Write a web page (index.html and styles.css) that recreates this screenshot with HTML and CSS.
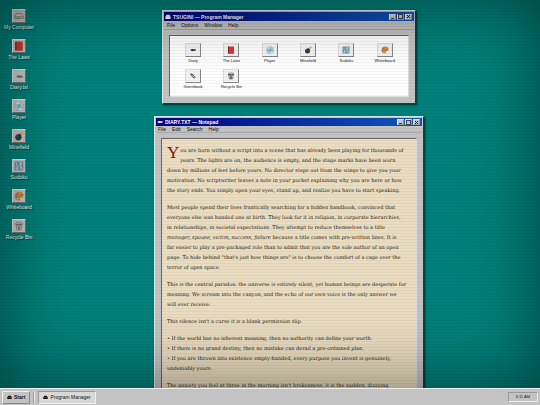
FILE: index.html
```html
<!DOCTYPE html>
<html lang="en">
<head>
    <meta charset="UTF-8">
    <meta name="viewport" content="width=device-width, initial-scale=1.0">
    <title>TSUGINI</title>
    <link rel="stylesheet" href="styles.css">
</head>
<body>
    <!-- Shared icons -->
    <svg class="sprite" aria-hidden="true">
        <symbol id="computer" viewBox="0 0 16 16">
            <path d="M4 2h8l3 6v5H1V8z" fill="currentColor"/>
            <path d="M3 8h10" stroke="#999" stroke-width="1"/>
        </symbol>
        <symbol id="drive" viewBox="0 0 16 16">
            <path d="M4 4h8l3 5v3H1V9z" fill="#d0d0d0" stroke="#666" stroke-width="1"/>
            <path d="M1 9h14M4 11h6" stroke="#666" stroke-width="1"/>
        </symbol>
        <symbol id="book" viewBox="0 0 16 16">
            <path d="M2 1h12v14H2z" fill="#d43a32"/>
            <path d="M2 1h2v14H2z" fill="#8f1d1d"/>
            <path d="M4 14h10v1H4z" fill="#933"/>
        </symbol>
        <symbol id="pen" viewBox="0 0 16 16">
            <path d="M0 8l6-3 3 1h6v4H9l-3 1z" fill="currentColor"/>
        </symbol>
        <symbol id="disc" viewBox="0 0 16 16">
            <circle cx="8" cy="8" r="7" fill="#a9d3da" stroke="#87b5bf" stroke-width="1"/>
            <path d="M8 8L3 3a7 7 0 0 1 5-2zM8 8l5 5a7 7 0 0 1-5 2z" fill="#cfe9ed"/>
            <circle cx="8" cy="8" r="3" fill="#6b9dab"/>
            <circle cx="8" cy="8" r="1" fill="#fff"/>
        </symbol>
        <symbol id="bomb" viewBox="0 0 16 16">
            <circle cx="7" cy="10" r="5" fill="#343a3d"/>
            <path d="M9 4l3 3-2 2-3-3z" fill="#343a3d"/>
            <path d="M11 5q1-3 3-2" fill="none" stroke="#97703b" stroke-width="1"/>
            <path d="M13 0l1 2 2 1-2 1-1 2-1-2-2-1 2-1z" fill="#f0a030"/>
            <circle cx="5" cy="8" r="1" fill="#777"/>
        </symbol>
        <symbol id="numbers" viewBox="0 0 16 16">
            <rect x="1" y="1" width="14" height="14" fill="#7199ae"/>
            <path d="M4 3v4M9 3h3v2H9v2h3M4 9h2v4H3M6 11H4M10 9v2h3M12 9v4" fill="none" stroke="#dcebf1" stroke-width="1"/>
        </symbol>
        <symbol id="palette" viewBox="0 0 16 16">
            <path d="M8 1c5 0 8 3 7 7-1 3-4 1-5 3s1 4-3 4c-4 0-6-3-6-7s3-7 7-7z" fill="#ca8444"/>
            <circle cx="5" cy="5" r="1" fill="#d43c32"/>
            <circle cx="9" cy="4" r="1" fill="#f3d04a"/>
            <circle cx="12" cy="7" r="1" fill="#4a90b8"/>
            <circle cx="4" cy="9" r="1" fill="#54914a"/>
            <circle cx="6" cy="12" r="1" fill="#fff"/>
        </symbol>
        <symbol id="pencil" viewBox="0 0 16 16">
            <path d="M2 2l4 1 8 8-3 3-8-8z" fill="#ddd" stroke="#222" stroke-width="2"/>
            <path d="M5 8l4-4" stroke="#222" stroke-width="1"/>
        </symbol>
        <symbol id="bin" viewBox="0 0 16 16">
            <path d="M3 5h10l-2 9H5z" fill="none" stroke="currentColor" stroke-width="1"/>
            <path d="M5 6l5 8M11 6l-5 8M8 6v7" stroke="currentColor" stroke-width="1"/>
            <ellipse cx="8" cy="4" rx="6" ry="2" fill="none" stroke="currentColor" stroke-width="1"/>
        </symbol>
    </svg>

    <main class="desktop">
        <nav class="shortcuts">
            <button class="shortcut"><span class="tile"><svg class="icon"><use href="#drive"/></svg></span>My Computer</button>
            <button class="shortcut"><span class="tile"><svg class="icon"><use href="#book"/></svg></span>The Laws</button>
            <button class="shortcut"><span class="tile"><svg class="icon small light"><use href="#pen"/></svg></span>Diary.txt</button>
            <button class="shortcut"><span class="tile"><svg class="icon"><use href="#disc"/></svg></span>Player</button>
            <button class="shortcut"><span class="tile"><svg class="icon"><use href="#bomb"/></svg></span>Minefield</button>
            <button class="shortcut"><span class="tile"><svg class="icon"><use href="#numbers"/></svg></span>Sudoku</button>
            <button class="shortcut"><span class="tile"><svg class="icon"><use href="#palette"/></svg></span>Whiteboard</button>
            <button class="shortcut"><span class="tile"><svg class="icon light"><use href="#bin"/></svg></span>Recycle Bin</button>
        </nav>

        <!-- Program Manager -->
        <section class="window program-manager">
            <header class="title-bar">
                <svg class="title-icon"><use href="#computer"/></svg>
                <h2 class="title">TSUGINI — Program Manager</h2>
                <button class="control minimize" aria-label="Minimize"></button>
                <button class="control maximize" aria-label="Maximize"></button>
                <button class="control close" aria-label="Close"></button>
            </header>
            <div class="menu-bar">
                <button>File</button>
                <button>Options</button>
                <button>Window</button>
                <button>Help</button>
            </div>
            <div class="client programs">
                <button class="program"><span class="tile"><svg class="icon small"><use href="#pen"/></svg></span>Diary</button>
                <button class="program"><span class="tile"><svg class="icon"><use href="#book"/></svg></span>The Laws</button>
                <button class="program"><span class="tile"><svg class="icon"><use href="#disc"/></svg></span>Player</button>
                <button class="program"><span class="tile"><svg class="icon"><use href="#bomb"/></svg></span>Minefield</button>
                <button class="program"><span class="tile"><svg class="icon"><use href="#numbers"/></svg></span>Sudoku</button>
                <button class="program"><span class="tile"><svg class="icon"><use href="#palette"/></svg></span>Whiteboard</button>
                <button class="program"><span class="tile"><svg class="icon small"><use href="#pencil"/></svg></span>Guestbook</button>
                <button class="program"><span class="tile"><svg class="icon"><use href="#bin"/></svg></span>Recycle Bin</button>
            </div>
        </section>

        <!-- Notepad -->
        <section class="window notepad">
            <header class="title-bar">
                <svg class="title-icon"><use href="#pen"/></svg>
                <h2 class="title">DIARY.TXT — Notepad</h2>
                <button class="control minimize" aria-label="Minimize"></button>
                <button class="control maximize" aria-label="Maximize"></button>
                <button class="control close" aria-label="Close"></button>
            </header>
            <div class="menu-bar">
                <button>File</button>
                <button>Edit</button>
                <button>Search</button>
                <button>Help</button>
            </div>
            <article class="client paper">
                <p><span class="drop-cap">Y</span>ou are born without a script into a scene that has already been playing for thousands of<br>
                years. The lights are on, the audience is empty, and the stage marks have been worn<br>
                down by millions of feet before yours. No director steps out from the wings to give you your<br>
                motivation. No scriptwriter leaves a note in your pocket explaining why you are here or how<br>
                the story ends. You simply open your eyes, stand up, and realize you have to start speaking.</p>
                <p>Most people spend their lives frantically searching for a hidden handbook, convinced that<br>
                everyone else was handed one at birth. They look for it in religion, in corporate hierarchies,<br>
                in relationships, in societal expectations. They attempt to reduce themselves to a title<br>
                <em>manager, spouse, victim, success, failure</em> because a title comes with pre-written lines. It is<br>
                far easier to play a pre-packaged role than to admit that you are the sole author of an open<br>
                page. To hide behind "that's just how things are" is to choose the comfort of a cage over the<br>
                terror of open space.</p>
                <p>This is the central paradox: the universe is entirely silent, yet human beings are desperate for<br>
                meaning. We scream into the canyon, and the echo of our own voice is the only answer we<br>
                will ever receive.</p>
                <p>This silence isn't a curse it is a blank permission slip.</p>
                <p>• If the world has no inherent meaning, then no authority can define your worth.<br>
                • If there is no grand destiny, then no mistake can derail a pre-ordained plan.<br>
                • If you are thrown into existence empty-handed, every purpose you invent is genuinely,<br>
                undeniably yours.</p>
                <p>The anxiety you feel at three in the morning isn't brokenness; it is the sudden, dizzying</p>
            </article>
        </section>
        <div class="screen-glare"></div>
    </main>

    <footer class="taskbar">
        <button class="start"><svg class="task-icon"><use href="#computer"/></svg>Start</button>
        <span class="divider"></span>
        <button class="task"><svg class="task-icon"><use href="#computer"/></svg>Program Manager</button>
        <time class="clock">3:11 AM</time>
    </footer>
</body>
</html>
```

FILE: styles.css
```css
* {
    box-sizing: border-box;
}

body {
    display: flex;
    flex-direction: column;
    height: 100vh;
    margin: 0;
    overflow: hidden;
    background: #c0c0c0;
    color: #111;
    font-family: "Liberation Sans", Arial, sans-serif;
    font-size: 5px;
    line-height: 6px;
}

button {
    padding: 0;
    border: none;
    background: none;
    color: inherit;
    font: inherit;
}

svg {
    flex-shrink: 0;
}

.sprite {
    position: absolute;
    width: 0;
    height: 0;
}

.desktop {
    position: relative;
    flex: 1;
    min-height: 0;
    overflow: hidden;
    background: #00807a;
}

/* Desktop icons */
.shortcuts {
    display: flex;
    flex-direction: column;
    align-items: flex-start;
    gap: 9px;
    padding: 9px 4px;
}

.shortcut,
.program {
    display: flex;
    flex-direction: column;
    align-items: center;
    gap: 1px;
}

.shortcut {
    width: 30px;
    color: #fff;
    white-space: nowrap;
    text-shadow: 1px 1px 1px #003030;
}

.tile {
    display: flex;
    align-items: center;
    justify-content: center;
    width: 14px;
    height: 14px;
    background: #c8c8c8;
    border: 1px solid;
    border-color: #e8e8e8 #777 #777 #e8e8e8;
}

.icon {
    width: 10px;
    height: 10px;
    color: #222;
}

.icon.small {
    width: 7px;
    height: 7px;
}

.icon.light {
    color: #666;
}

/* Windows */
.window {
    position: absolute;
    display: flex;
    flex-direction: column;
    padding: 1px;
    background: #c3c3c3;
    border: 1px solid;
    border-color: #e8e8e8 #333 #333 #e8e8e8;
    box-shadow: 1px 1px 2px #002b2b;
}

.program-manager {
    top: 10px;
    left: 162px;
    width: 47%;
}

.notepad {
    top: 116px;
    left: 154px;
    width: 50%;
}

.title-bar {
    display: flex;
    align-items: center;
    gap: 1px;
    height: 8px;
    padding: 0 2px 0 1px;
    background: linear-gradient(90deg, #000080, #1058b8);
    color: #fff;
}

.program-manager .title-bar {
    height: 9px;
}

.title-icon {
    width: 6px;
    height: 6px;
}

.title {
    flex: 1;
    margin: 0 0 0 1px;
    font-size: 5px;
    font-weight: bold;
}

.control {
    display: flex;
    align-items: center;
    justify-content: center;
    width: 7px;
    height: 6px;
    background: #c8c8c8;
    border: 1px solid;
    border-color: #eee #999 #999 #eee;
}

.control::before {
    content: "";
    width: 3px;
    height: 3px;
    border: 1px solid #444;
}

.minimize::before {
    border-width: 0 0 1px;
}

.close::before {
    border: none;
    background:
        linear-gradient(45deg, transparent 40%, #222 40%, #222 60%, transparent 60%),
        linear-gradient(135deg, transparent 40%, #222 40%, #222 60%, transparent 60%);
}

.menu-bar {
    display: flex;
    gap: 6px;
    padding: 1px 3px;
    border-bottom: 1px solid #aaa;
}

.notepad .menu-bar {
    padding: 0 2px;
}

.client {
    margin: 5px;
    border: 1px solid;
    border-color: #666 #ddd #ddd #666;
}

.programs {
    display: grid;
    grid-template-columns: repeat(6, 1fr);
    align-content: start;
    row-gap: 5px;
    min-height: 62px;
    padding: 7px 4px 0;
    background: #fff;
}

.program {
    font-size: 4px;
}

.program .tile {
    width: 16px;
    background: #f4f4f4;
    border-color: #ddd #888 #888 #ddd;
}

.program .icon {
    width: 8px;
    height: 8px;
}

.program .icon.small {
    width: 6px;
    height: 6px;
}

.paper {
    padding: 6px 5px;
    background: #eadcc0;
    color: #221c14;
    font-family: "DejaVu Serif", Georgia, serif;
    font-size: 5px;
    line-height: 10px;
    white-space: nowrap;
}

.paper p {
    margin: 0 0 7px;
}

.drop-cap {
    float: left;
    margin-right: 1px;
    color: #801010;
    font-family: "Liberation Serif", Georgia, serif;
    font-size: 17px;
    line-height: 16px;
}

/* Scanlines and darkened corners */
.screen-glare {
    position: absolute;
    inset: 0;
    pointer-events: none;
    background: repeating-linear-gradient(transparent 0 2px, rgba(0, 0, 0, 0.04) 2px 3px);
    box-shadow: inset 0 0 70px rgba(0, 0, 0, 0.5);
}

/* Taskbar */
.taskbar {
    display: flex;
    align-items: center;
    gap: 3px;
    height: 17px;
    padding: 0 2px;
    background: #c3c3c3;
    border-top: 1px solid #eee;
}

.start,
.task {
    display: flex;
    align-items: center;
    gap: 2px;
    height: 13px;
    padding: 0 4px;
    border: 1px solid;
    border-color: #eee #888 #888 #eee;
}

.start {
    font-weight: bold;
}

.task {
    min-width: 54px;
    background: #d8d8d8;
    border-color: #999 #eee #eee #999;
    white-space: nowrap;
}

.task-icon {
    width: 5px;
    height: 5px;
}

.divider {
    height: 11px;
    border-left: 1px solid #999;
    border-right: 1px solid #eee;
}

.clock {
    margin-left: auto;
    padding: 1px 7px;
    border: 1px solid;
    border-color: #999 #eee #eee #999;
    font-size: 4px;
}
```
